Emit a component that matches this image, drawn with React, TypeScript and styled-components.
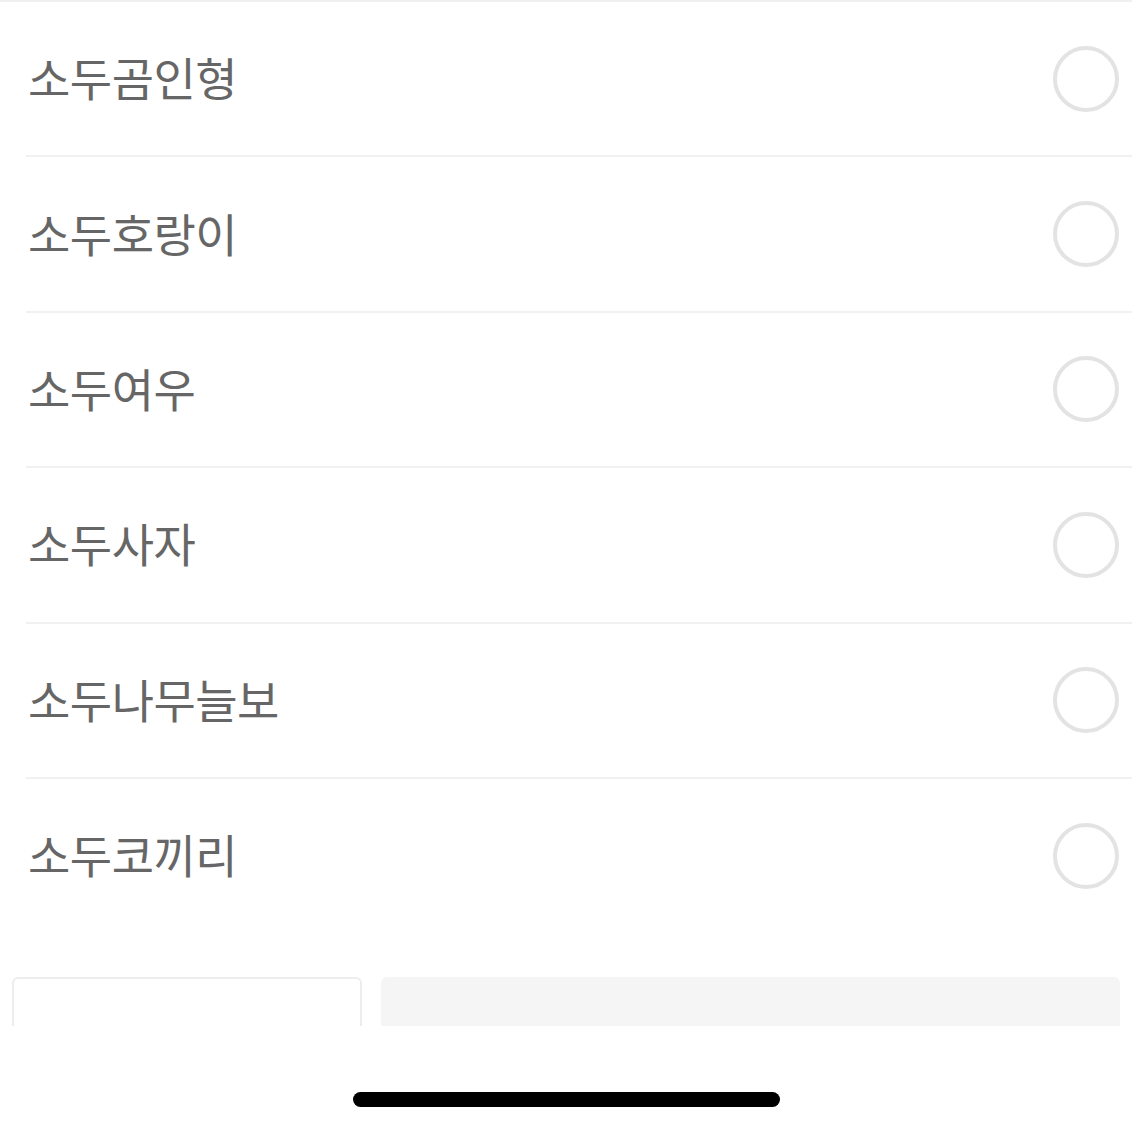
import React from "react";
import styled, { createGlobalStyle } from "styled-components";

const Global = createGlobalStyle`
  html, body { margin: 0; padding: 0; background: #fff; }
  body { font-family: "Noto Sans CJK KR", "Noto Sans", sans-serif; }
`;

const Page = styled.div`
  width: 1132px;
  height: 1132px;
  display: flex;
  flex-direction: column;
  background: #fff;
  overflow: hidden;
`;

const TopLine = styled.div`
  height: 2px;
  background: #f0f0f0;
`;

const List = styled.div`
  display: flex;
  flex-direction: column;
`;

const Row = styled.div<{ $last?: boolean }>`
  height: 153.4px;
  display: flex;
  align-items: center;
  justify-content: space-between;
  padding: 0 13px 0 28px;
  position: relative;
  border-bottom: ${(p) => (p.$last ? "none" : "2px solid transparent")};
  &::after {
    content: "";
    display: ${(p) => (p.$last ? "none" : "block")};
    position: absolute;
    left: 26px;
    right: 0;
    bottom: -2px;
    height: 2px;
    background: #f1f1f1;
  }
`;

const Label = styled.span`
  font-size: 46px;
  color: #666666;
  letter-spacing: -0.5px;
  line-height: 1;
  padding-bottom: 5px;
`;

const Radio = styled.span`
  width: 66px;
  height: 66px;
  border: 4.5px solid #e3e3e3;
  border-radius: 50%;
  box-sizing: border-box;
  display: block;
`;

const Footer = styled.div`
  margin-top: 45px;
  height: 49px;
  display: flex;
  gap: 19px;
  padding: 0 12px;
  overflow: hidden;
`;

const OutlineButton = styled.div`
  width: 350px;
  height: 70px;
  box-sizing: border-box;
  border: 2px solid #ededed;
  border-radius: 6px;
  background: #fff;
`;

const FillButton = styled.div`
  flex: 1;
  height: 70px;
  border-radius: 6px;
  background: #f5f5f5;
`;

const HomeArea = styled.div`
  flex: 1;
  display: flex;
  justify-content: center;
  padding-top: 66px;
`;

const HomeBar = styled.div`
  width: 427px;
  height: 15px;
  border-radius: 8px;
  background: #000;
`;

const items = ["소두곰인형", "소두호랑이", "소두여우", "소두사자", "소두나무늘보", "소두코끼리"];

export default function App() {
  return (
    <Page>
      <Global />
      <TopLine />
      <List>
        {items.map((t, i) => (
          <Row key={t} $last={i === items.length - 1}>
            <Label>{t}</Label>
            <Radio />
          </Row>
        ))}
      </List>
      <Footer>
        <OutlineButton />
        <FillButton />
      </Footer>
      <HomeArea>
        <HomeBar />
      </HomeArea>
    </Page>
  );
}
